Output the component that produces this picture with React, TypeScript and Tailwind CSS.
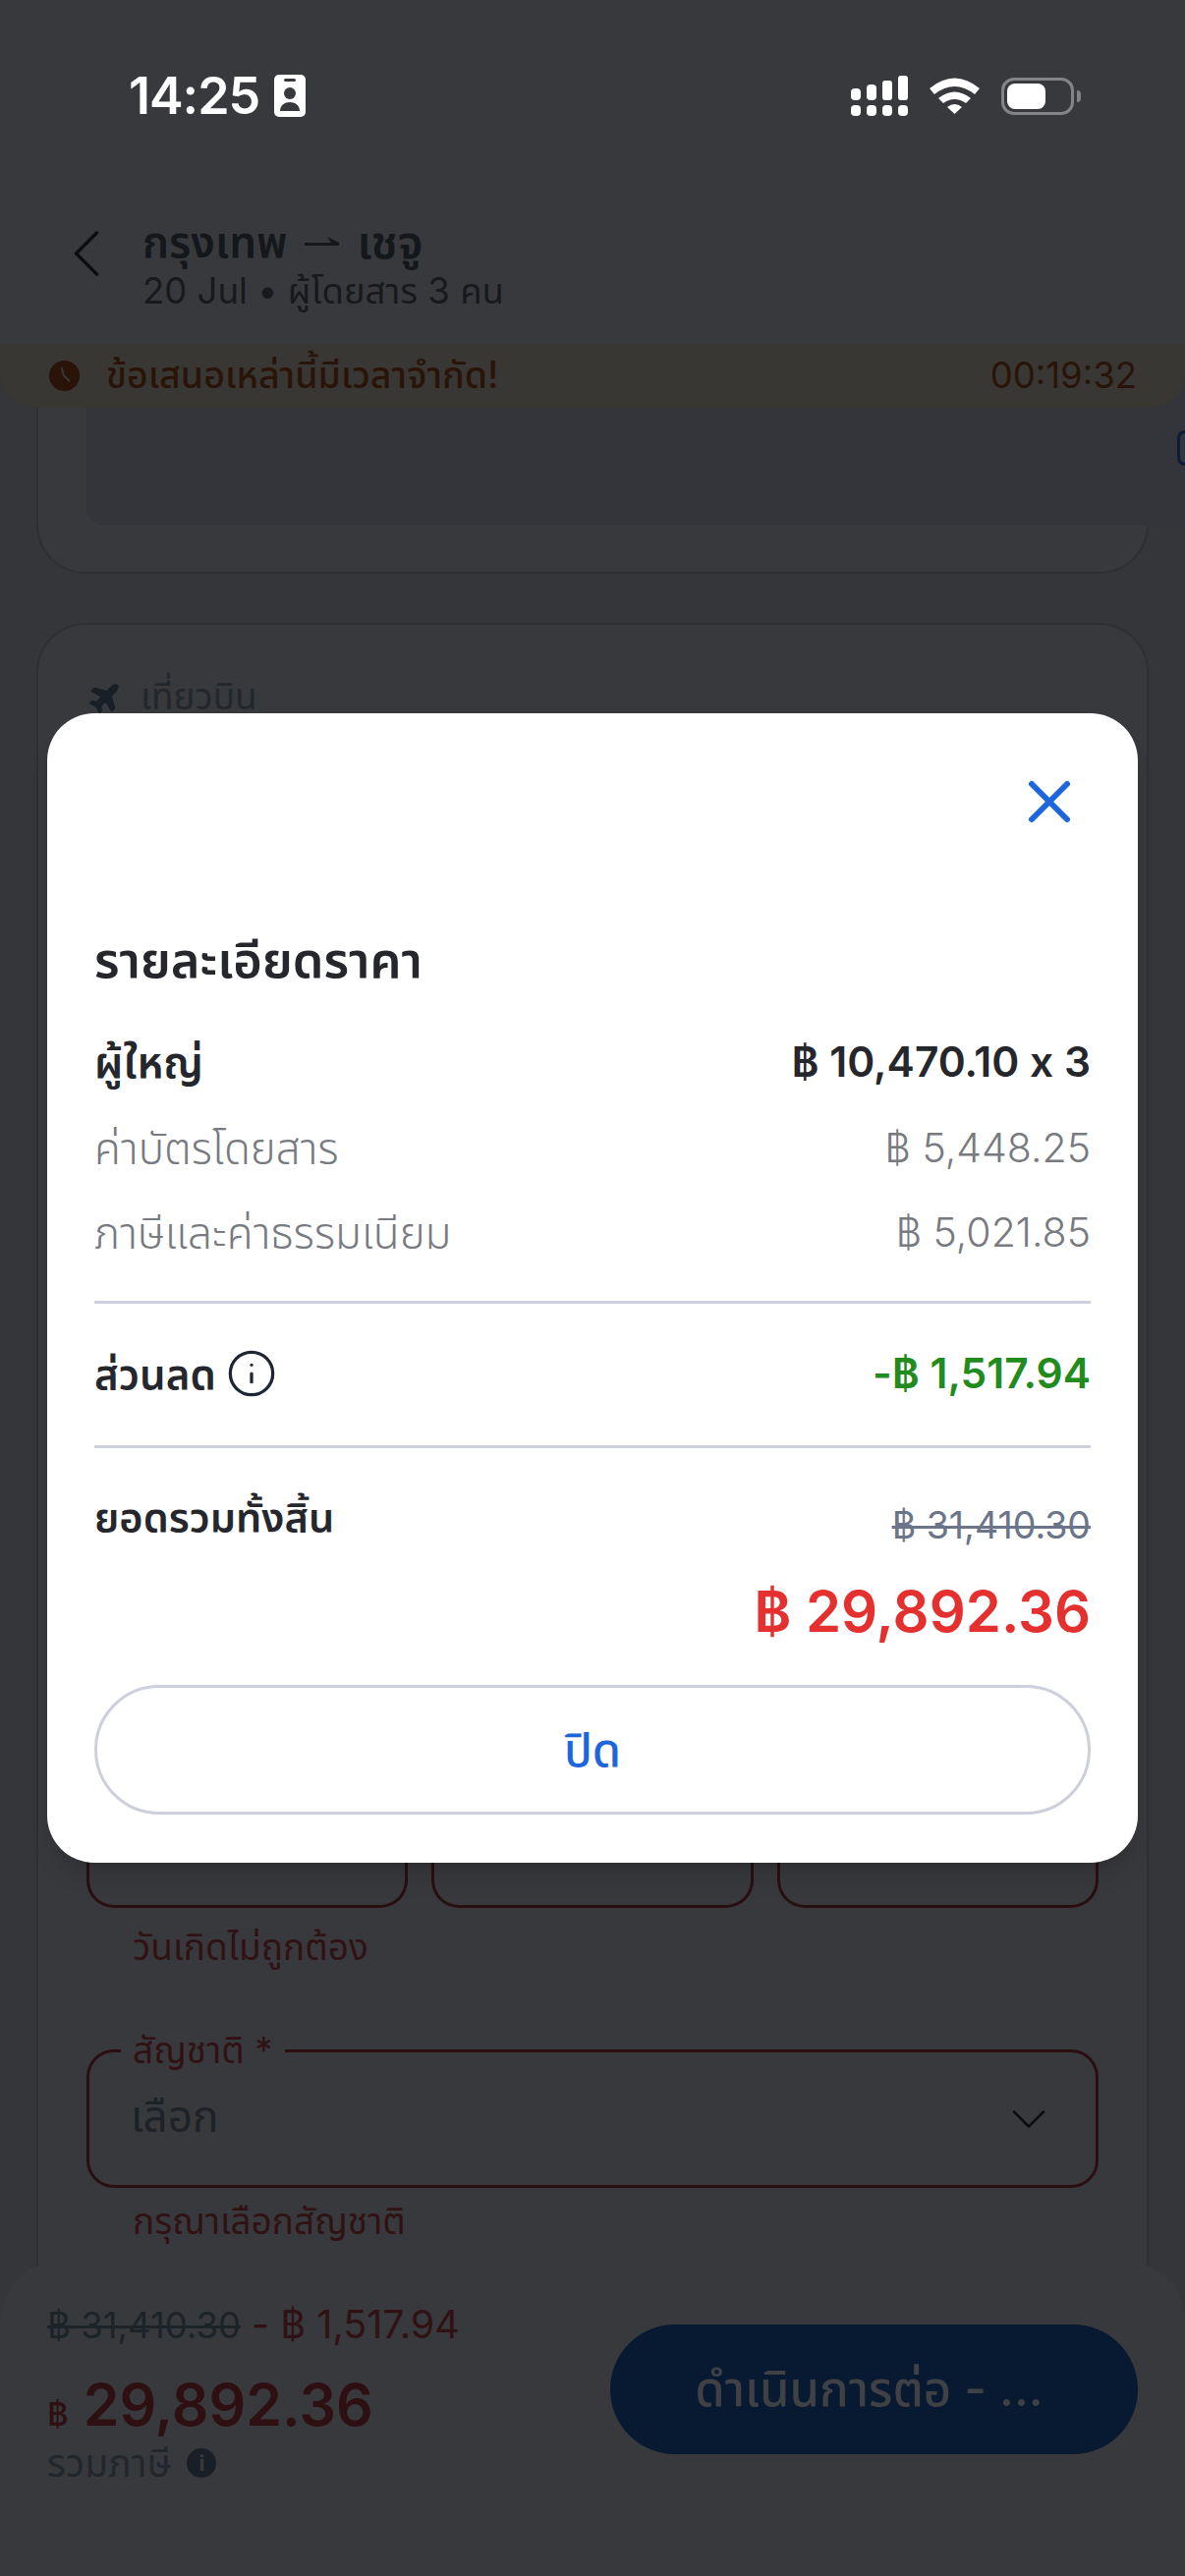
import { ChevronDown, ChevronLeft, Info, X } from 'lucide-react';
import { FaPlane } from 'react-icons/fa';

const FONT = "font-['Inter','Noto_Sans','Noto_Sans_Thai',sans-serif]";

const SignalIcon = () => (
    <svg width="58" height="41" viewBox="0 0 58 41" fill="white">
        <rect x="0" y="13" width="10" height="12" rx="4" />
        <rect x="16" y="9" width="10" height="16" rx="4" />
        <rect x="32" y="5" width="10" height="20" rx="3" />
        <rect x="48" y="0" width="10" height="25" rx="3" />
        <rect x="0" y="30" width="10" height="11" rx="4" />
        <rect x="16" y="30" width="10" height="11" rx="4" />
        <rect x="32" y="30" width="10" height="11" rx="4" />
        <rect x="48" y="30" width="10" height="11" rx="4" />
    </svg>
);

const WifiIcon = () => (
    <svg width="51" height="37" viewBox="0 0 51 37" fill="white">
        <path d="M0 11 Q25.5 -10 51 11 L46 17 Q25.500 1 5 17 Z" />
        <path d="M9 21 Q25.500 8 42 21 L37 26 Q25.500 18 14 26 Z" />
        <path d="M18 30 Q25.500 24 33 30 L25.500 37 Z" />
    </svg>
);

const BatteryIcon = () => (
    <div className="flex items-center gap-[3px]">
        <div className="w-[74px] h-[38px] rounded-[13px] border-[3px] border-[#838486] p-[3px] flex">
            <div className="w-[39px] h-full rounded-[8px] bg-white" />
        </div>
        <div className="w-[4px] h-[12px] rounded-r-full bg-[#838486]" />
    </div>
);

const IdIcon = () => (
    <svg width="32" height="43" viewBox="0 0 32 43">
        <rect width="32" height="43" rx="5" fill="white" />
        <rect x="10" y="4" width="12" height="3" rx="1.5" fill="#38393d" />
        <circle cx="16" cy="19" r="6" fill="#38393d" />
        <path d="M6 37 C6 25 26 25 26 37 Z" fill="#38393d" />
    </svg>
);

const ClockIcon = () => (
    <svg width="31" height="31" viewBox="0 0 31 31">
        <circle cx="15.500" cy="15.500" r="15.500" fill="#2a1409" />
        <path d="M12.500 7 L15 15.500 L21 21" stroke="#393734" strokeWidth="2" fill="none" />
    </svg>
);

const Row = ({ label, value, className }: { label: string; value: string; className: string }) => (
    <div className={`flex items-center justify-between ${className}`}>
        <span className="text-[44px]">{label}</span>
        <span>{value}</span>
    </div>
);

const DateBox = () => <div className="flex-1 h-[110px] rounded-b-[28px] border-[3px] border-t-0 border-[#2a0f11]" />;

const PriceModal = () => (
    <div className="absolute left-[48px] top-[726px] z-20 w-[1110px] h-[1170px] rounded-[48px] bg-white px-[48px] text-[#25272c] shadow-xl">
        <div className="flex justify-end pt-[54px]">
            <X size={72} strokeWidth={2} className="text-[#1d66dc] mr-[6px]" />
        </div>
        <h2 className="mt-[95px] text-[50.500px] leading-[60px] font-semibold">รายละเอียดราคา</h2>
        <Row className="mt-[44px] h-[60px] text-[42.500px] font-semibold [font-feature-settings:'calt'_0]" label="ผู้ใหญ่" value="฿ 10,470.10 x 3" />
        <Row className="mt-[28px] h-[60px] text-[41px] font-light text-[#777a7f]" label="ค่าบัตรโดยสาร" value="฿ 5,448.25" />
        <Row className="mt-[26px] h-[60px] text-[41px] font-light text-[#777a7f]" label="ภาษีและค่าธรรมเนียม" value="฿ 5,021.85" />
        <div className="mt-[39px] h-[3px] bg-[#cdd0db]" />
        <div className="mt-[41px] h-[60px] flex items-center justify-between font-semibold">
            <span className="flex items-center gap-[10px] text-[42px]">
                ส่วนลด
                <Info size={52} strokeWidth={1.500} className="text-[#1f2633]" />
            </span>
            <span className="text-[42.500px] text-[#228b1e]">-฿ 1,517.94</span>
        </div>
        <div className="mt-[43px] h-[3px] bg-[#cdd0db]" />
        <div className="mt-[41px] flex justify-between">
            <span className="text-[41.500px] leading-[60px] font-semibold">ยอดรวมทั้งสิ้น</span>
            <span className="text-[37.500px] leading-[76px] text-[#6b7488] line-through decoration-[3px]">฿ 31,410.30</span>
        </div>
        <div className="mt-[13px] text-right text-[58px] leading-[72px] font-semibold text-[#e53030]">฿ 29,892.36</div>
        <button className="mt-[39px] w-full h-[132px] rounded-full border-[3px] border-[#cdd0db] text-[47px] font-medium text-[#1d66dc]">
            ปิด
        </button>
    </div>
);

export default function App() {
    return (
        <div className={`relative w-[1206px] h-[2622px] overflow-hidden flex flex-col bg-[#343639] ${FONT}`}>
            <header className="h-[350px] shrink-0 bg-[#38393d]">
                <div className="flex items-center justify-between pl-[131px] pr-[106px] pt-[76px]">
                    <div className="flex items-center gap-[15px]">
                        <span className="text-[52px] leading-[43px] font-semibold text-white tracking-[-1px]">14:25</span>
                        <IdIcon />
                    </div>
                    <div className="flex items-center gap-[22px]">
                        <SignalIcon />
                        <WifiIcon />
                        <BatteryIcon />
                    </div>
                </div>
                <div className="flex items-start pl-[46px] pt-[97px]">
                    <ChevronLeft size={84} strokeWidth={1} className="text-[#0b0d10]" />
                    <div className="ml-[15px] mt-[5px]">
                        <div className="flex items-center gap-[18px] text-[44px] leading-[50px] font-semibold text-[#14171b]">
                            <span>กรุงเทพ</span>
                            <svg width="35" height="10" viewBox="0 0 35 10" fill="#14171b">
                                <path d="M0 6 H35 V9 H0 Z M23 0 L35 6 H27 Z" />
                            </svg>
                            <span className="text-[47px]">เชจู</span>
                        </div>
                        <div className="mt-[3px] text-[36.500px] leading-[44px] text-[#17191d]">20 Jul • ผู้โดยสาร 3 คน</div>
                    </div>
                </div>
            </header>

            <div className="relative z-10 h-[65px] shrink-0 flex items-center rounded-b-[35px] bg-[#393734] pl-[50px] pr-[49px]">
                <ClockIcon />
                <span className="ml-[27px] text-[37.500px] font-medium text-[#2a1409]">ข้อเสนอเหล่านี้มีเวลาจำกัด!</span>
                <span className="ml-auto text-[36.500px] text-[#2a1409]">00:19:32</span>
            </div>

            <main className="relative flex-1 min-h-0 -mt-[20px] mx-[37px] flex flex-col gap-[50px]">
                <div className="h-[189px] shrink-0 rounded-b-[50px] border-2 border-t-0 border-[#2e3034] bg-[#38393d] pl-[49px]">
                    <div className="w-[1118px] h-[140px] rounded-bl-[20px] bg-[#33353a] flex justify-end pt-[43px]">
                        <div className="w-[8px] h-[36px] rounded-l-[8px] border-[3px] border-r-0 border-[#0a1e3a]" />
                    </div>
                </div>
                <div className="flex-1 rounded-t-[50px] border-2 border-b-0 border-[#2e3034] bg-[#38393d] px-[49px] pt-[53px]">
                    <div className="flex items-center gap-[18px] pl-[3px] text-[37px] leading-[40px] text-[#22272e]">
                        <FaPlane size={34} className="-rotate-45 text-[#191f27]" />
                        เที่ยวบิน
                    </div>
                    <div className="mt-[1103px] flex gap-[24px]">
                        <DateBox />
                        <DateBox />
                        <DateBox />
                    </div>
                    <p className="mt-[18px] pl-[47px] text-[37px] leading-[44px] text-[#301214]">วันเกิดไม่ถูกต้อง</p>
                    <div className="relative mt-[82px] h-[141px] rounded-[28px] border-[3px] border-[#2a0f11] flex items-center justify-between pl-[42px] pr-[38px]">
                        <span className="absolute -top-[24px] left-[32px] bg-[#38393d] px-[12px] text-[37px] leading-[44px] text-[#301214]">สัญชาติ *</span>
                        <span className="-mt-[6px] text-[44px] text-[#1d2228]">เลือก</span>
                        <ChevronDown size={60} strokeWidth={1} className="text-[#0b0d10]" />
                    </div>
                    <p className="mt-[12px] pl-[47px] text-[37px] leading-[44px] text-[#301214]">กรุณาเลือกสัญชาติ</p>
                </div>
            </main>

            <footer className="relative z-10 -mt-[60px] h-[320px] shrink-0 rounded-t-[60px] bg-[#38393d] flex items-start justify-between pl-[48px] pr-[48px] pt-[41px]">
                <div>
                    <div className="text-[39.500px] leading-[46px]">
                        <span className="text-[36.500px] text-[#1c2329] line-through decoration-[3px]">฿ 31,410.30</span>
                        <span className="text-[#301214]"> - ฿ 1,517.94</span>
                    </div>
                    <div className="mt-[22px] flex items-baseline gap-[15px] text-[#2e1012]">
                        <span className="text-[33px] font-medium">฿</span>
                        <span className="text-[59px] leading-[72px] font-semibold">29,892.36</span>
                    </div>
                    <div className="mt-[1px] flex items-center gap-[16px] text-[39px] leading-[44px] text-[#22272e]">
                        รวมภาษี
                        <span className="flex items-center justify-center w-[30px] h-[30px] rounded-full bg-[#191f27] text-[22px] font-bold text-[#38393d]">i</span>
                    </div>
                </div>
                <button className="mt-[23px] w-[537px] h-[132px] rounded-full bg-[#071a31] pr-[10px] text-[49px] font-medium text-[#3f4145]">
                    ดำเนินการต่อ - ...
                </button>
            </footer>

            <PriceModal />
        </div>
    );
}
